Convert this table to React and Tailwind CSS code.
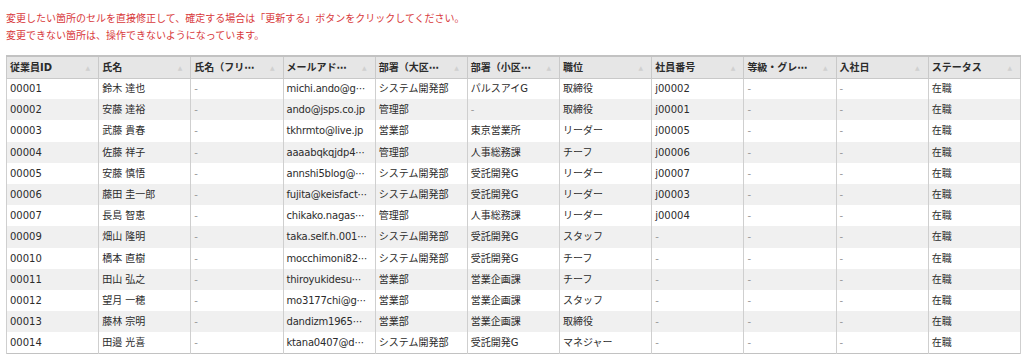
const headers = ['従業員ID', '氏名', '氏名（フリ⋯', 'メールアド⋯', '部署（大区⋯', '部署（小区⋯', '職位', '社員番号', '等級・グレ⋯', '入社日', 'ステータス']

const rows = [
  ['00001', '鈴木 達也', '-', 'michi.ando@g⋯', 'システム開発部', 'パルスアイG', '取締役', 'j00002'],
  ['00002', '安藤 達裕', '-', 'ando@jsps.co.jp', '管理部', '-', '取締役', 'j00001'],
  ['00003', '武藤 貴春', '-', 'tkhrmto@live.jp', '営業部', '東京営業所', 'リーダー', 'j00005'],
  ['00004', '佐藤 祥子', '-', 'aaaabqkqjdp4⋯', '管理部', '人事総務課', 'チーフ', 'j00006'],
  ['00005', '安藤 慎悟', '-', 'annshi5blog@⋯', 'システム開発部', '受託開発G', 'リーダー', 'j00007'],
  ['00006', '藤田 圭一郎', '-', 'fujita@keisfact⋯', 'システム開発部', '受託開発G', 'リーダー', 'j00003'],
  ['00007', '長島 智恵', '-', 'chikako.nagas⋯', '管理部', '人事総務課', 'リーダー', 'j00004'],
  ['00009', '畑山 隆明', '-', 'taka.self.h.001⋯', 'システム開発部', '受託開発G', 'スタッフ', '-'],
  ['00010', '橋本 直樹', '-', 'mocchimoni82⋯', 'システム開発部', '受託開発G', 'チーフ', '-'],
  ['00011', '田山 弘之', '-', 'thiroyukidesu⋯', '営業部', '営業企画課', 'チーフ', '-'],
  ['00012', '望月 一穂', '-', 'mo3177chi@g⋯', '営業部', '営業企画課', 'スタッフ', '-'],
  ['00013', '藤林 宗明', '-', 'dandizm1965⋯', '営業部', '営業企画課', '取締役', '-'],
  ['00014', '田邉 光喜', '-', 'ktana0407@d⋯', 'システム開発部', '受託開発G', 'マネジャー', '-'],
]

export default function App() {
  return (
    <div
      className="bg-white px-[6px] pt-[10px] h-[354px] overflow-hidden"
      style={{ fontFamily: '"DejaVu Sans", "Noto Sans CJK JP", sans-serif' }}
    >
      {/* Notice */}
      <div className="text-[10px] leading-[17px] text-[#d8393b]">
        <p>変更したい箇所のセルを直接修正して、確定する場合は「更新する」ボタンをクリックしてください。</p>
        <p>変更できない箇所は、操作できないようになっています。</p>
      </div>

      {/* Grid */}
      <table className="mt-[11px] w-[1015px] table-fixed border-collapse border border-t-2 border-[#c2c2c2] text-[10px] text-[#2b2b2b]">
        <thead>
          <tr className="bg-[#e6e6e6] h-[22px]">
            {headers.map((h) => (
              <th key={h} className="border border-[#c9c9c9] pl-[3px] pr-[4px] text-left font-bold text-[#2b2b2b]">
                <div className="flex items-center justify-between">
                  <span className="whitespace-nowrap">{h}</span>
                  <span className="text-[6px] text-[#d0d0d0] pr-[4px]">▲</span>
                </div>
              </th>
            ))}
          </tr>
        </thead>
        <tbody>
          {rows.map((r, i) => (
            <tr key={r[0]} className={`h-[21.2px] ${i % 2 ? 'bg-[#f0f0f0]' : 'bg-white'}`}>
              {[...r, '-', '-', '在職'].map((c, j) => (
                <td
                  key={j}
                  className={`border-x border-[#cfcfcf] pl-[3px] pr-0 whitespace-nowrap overflow-hidden ${j === 3 ? 'tracking-[-0.2px]' : ''} ${c === '-' ? 'text-[#999]' : 'text-[#2b2b2b]'}`}
                >
                  {c}
                </td>
              ))}
            </tr>
          ))}
        </tbody>
      </table>
    </div>
  )
}
